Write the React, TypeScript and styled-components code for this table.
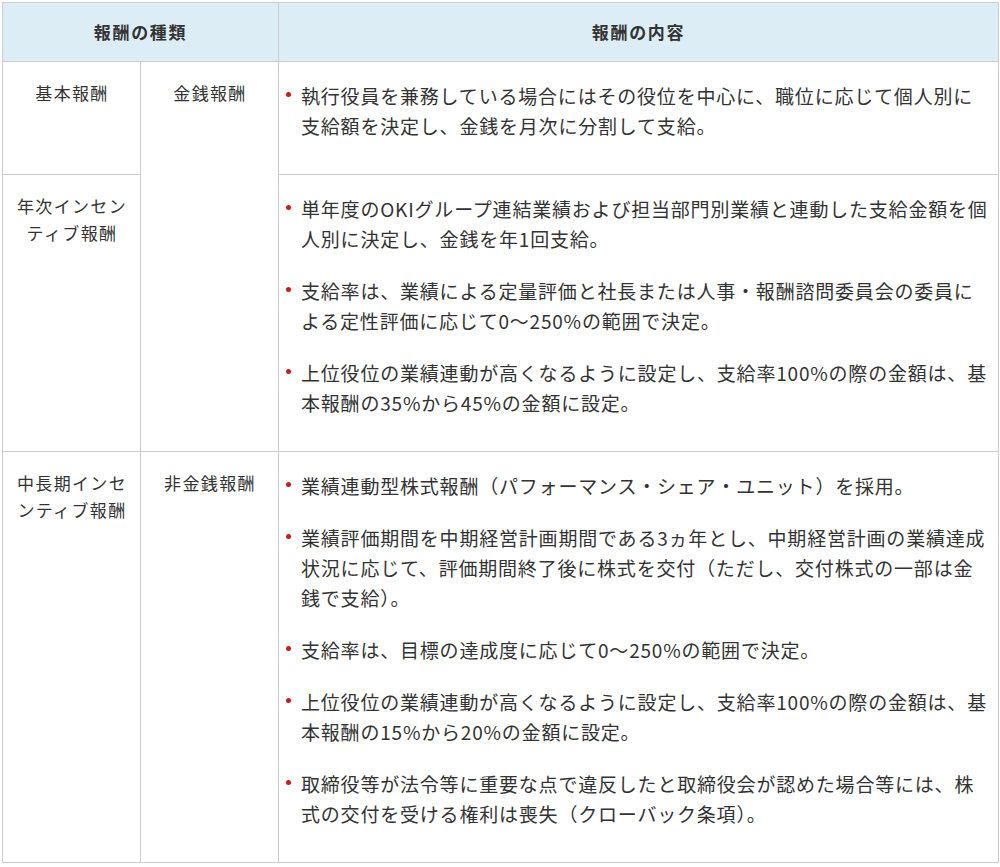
import React from "react";
import styled, { createGlobalStyle } from "styled-components";

const GlobalStyle = createGlobalStyle`
  html, body {
    margin: 0;
    padding: 0;
    background: #ffffff;
  }
  body {
    font-family: "Noto Sans CJK JP", "Noto Sans", sans-serif;
    color: #333333;
  }
`;

const Page = styled.div`
  padding: 2px 2px 0 2px;
`;

const Table = styled.table`
  width: 996px;
  border-collapse: collapse;
  table-layout: fixed;
  border: 1px solid #cccccc;
`;

const HeadCell = styled.th`
  background: #ddedf6;
  border: 1px solid #cccccc;
  height: 58px;
  padding: 0;
  font-size: 17px;
  line-height: 26px;
  font-weight: 700;
  letter-spacing: 0.1em;
  text-align: center;
  vertical-align: middle;
  color: #333333;
`;

const TypeCell = styled.td`
  border: 1px solid #cccccc;
  padding: 17px 10px 10px 11px;
  font-size: 17px;
  line-height: 27px;
  letter-spacing: 0.08em;
  text-align: center;
  vertical-align: top;
`;

const ContentCell = styled.td`
  border: 1px solid #cccccc;
  padding: 19px 6px 11px 7px;
  vertical-align: top;
`;

const List = styled.ul`
  list-style: none;
  margin: 0;
  padding: 0;
`;

const Item = styled.li`
  position: relative;
  padding-left: 15px;
  margin-bottom: 22px;
  font-size: 19px;
  line-height: 30px;
  letter-spacing: 0.8px;
  &::before {
    content: "";
    position: absolute;
    left: 0;
    top: 11px;
    width: 5px;
    height: 5px;
    border-radius: 50%;
    background: #cc1a1a;
  }
`;

type Row = {
  type: string;
  kind?: string;
  kindSpan?: number;
  items: string[];
};

const rows: Row[] = [
  {
    type: "基本報酬",
    kind: "金銭報酬",
    kindSpan: 2,
    items: [
      "執行役員を兼務している場合にはその役位を中心に、職位に応じて個人別に支給額を決定し、金銭を月次に分割して支給。",
    ],
  },
  {
    type: "年次インセンティブ報酬",
    items: [
      "単年度のOKIグループ連結業績および担当部門別業績と連動した支給金額を個人別に決定し、金銭を年1回支給。",
      "支給率は、業績による定量評価と社長または人事・報酬諮問委員会の委員による定性評価に応じて0～250%の範囲で決定。",
      "上位役位の業績連動が高くなるように設定し、支給率100%の際の金額は、基本報酬の35%から45%の金額に設定。",
    ],
  },
  {
    type: "中長期インセンティブ報酬",
    kind: "非金銭報酬",
    kindSpan: 1,
    items: [
      "業績連動型株式報酬（パフォーマンス・シェア・ユニット）を採用。",
      "業績評価期間を中期経営計画期間である3ヵ年とし、中期経営計画の業績達成状況に応じて、評価期間終了後に株式を交付（ただし、交付株式の一部は金銭で支給）。",
      "支給率は、目標の達成度に応じて0～250%の範囲で決定。",
      "上位役位の業績連動が高くなるように設定し、支給率100%の際の金額は、基本報酬の15%から20%の金額に設定。",
      "取締役等が法令等に重要な点で違反したと取締役会が認めた場合等には、株式の交付を受ける権利は喪失（クローバック条項）。",
    ],
  },
];

export default function App() {
  return (
    <>
      <GlobalStyle />
      <Page>
        <Table>
          <colgroup>
            <col style={{ width: 138 }} />
            <col style={{ width: 138 }} />
            <col style={{ width: 720 }} />
          </colgroup>
          <thead>
            <tr>
              <HeadCell colSpan={2}>報酬の種類</HeadCell>
              <HeadCell>報酬の内容</HeadCell>
            </tr>
          </thead>
          <tbody>
            {rows.map((row) => (
              <tr key={row.type}>
                <TypeCell>{row.type}</TypeCell>
                {row.kind && <TypeCell rowSpan={row.kindSpan}>{row.kind}</TypeCell>}
                <ContentCell>
                  <List>
                    {row.items.map((it) => (
                      <Item key={it}>{it}</Item>
                    ))}
                  </List>
                </ContentCell>
              </tr>
            ))}
          </tbody>
        </Table>
      </Page>
    </>
  );
}
